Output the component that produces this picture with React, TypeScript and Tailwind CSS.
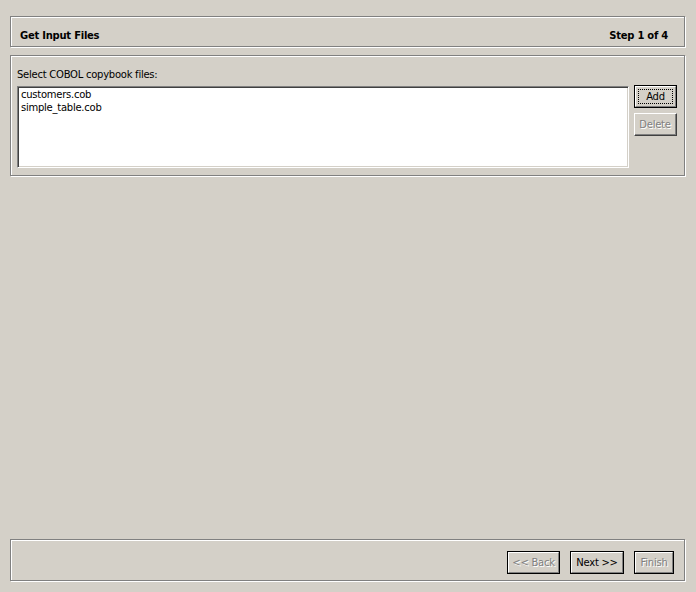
import type { ReactNode } from "react";

const face = "bg-[#d4d0c8]";
const font = "font-['DejaVu_Sans',Tahoma,sans-serif] text-[10px] tracking-[-0.25px] text-black";

// Java etched border: gray line with a white line one pixel down/right
function Etched({ className, children }: { className?: string; children: ReactNode }) {
  return (
    <div className={`w-[675px] border border-[#808080] shadow-[inset_1px_1px_0_#fff,1px_1px_0_#fff] ${className ?? ""}`}>
      {children}
    </div>
  );
}

function WizardButton({ label, width, disabled }: { label: string; width: string; disabled?: boolean }) {
  return (
    <div className={`h-[23px] ${width} border border-black`}>
      <div className="flex h-full items-center justify-center border-t border-l border-white border-r border-b border-r-[#808080] border-b-[#808080]">
        <span className={disabled ? "text-[#808080] [text-shadow:1px_1px_0_#fff]" : "text-black"}>{label}</span>
      </div>
    </div>
  );
}

export default function App() {
  const files = ["customers.cob", "simple_table.cob"];

  return (
    <div className={`flex h-[592px] w-[696px] flex-col pl-[10px] ${face} ${font}`}>
      <Etched className="mt-[16px] flex h-[31px] items-center justify-between pl-[9px] pr-[16px] pt-[8px] font-bold">
        <span>Get Input Files</span>
        <span>Step 1 of 4</span>
      </Etched>

      <Etched className="mt-[8px] h-[121px] pl-[6px] pt-[12px]">
        <div className="h-[13px] leading-[13px]">Select COBOL copybook files:</div>
        <div className="mt-[4px] flex gap-[5px]">
          <div className="mt-[1px] h-[82px] w-[612px] border border-[#808080] border-r-white border-b-white bg-white shadow-[inset_1px_1px_0_#404040,inset_-1px_-1px_0_#d4d0c8]">
            <div className="pl-[2px] pt-[1px]">
              {files.map((f) => (
                <div key={f} className="h-[13px] pl-[1px] leading-[13px]">
                  {f}
                </div>
              ))}
            </div>
          </div>
          <div className="flex flex-col gap-[5px]">
            <div className="h-[23px] w-[43px] border border-black">
              <div className="h-full border-t border-l border-white border-r border-b border-r-[#808080] border-b-[#808080] p-[2px]">
                <div className="flex h-full items-center justify-center border border-dotted border-black">Add</div>
              </div>
            </div>
            <div className="h-[23px] w-[43px] border border-white border-r-[#404040] border-b-[#404040]">
              <div className="flex h-full items-center justify-center border-r border-b border-[#808080]">
                <span className="text-[#808080] [text-shadow:1px_1px_0_#fff]">Delete</span>
              </div>
            </div>
          </div>
        </div>
      </Etched>

      <div className="flex-1" />

      <Etched className="mb-[11px] flex h-[42px] items-start justify-end gap-[10px] pr-[10px] pt-[11px]">
        <WizardButton label="<< Back" width="w-[53px]" disabled />
        <WizardButton label="Next >>" width="w-[54px]" />
        <WizardButton label="Finish" width="w-[40px]" disabled />
      </Etched>
    </div>
  );
}
